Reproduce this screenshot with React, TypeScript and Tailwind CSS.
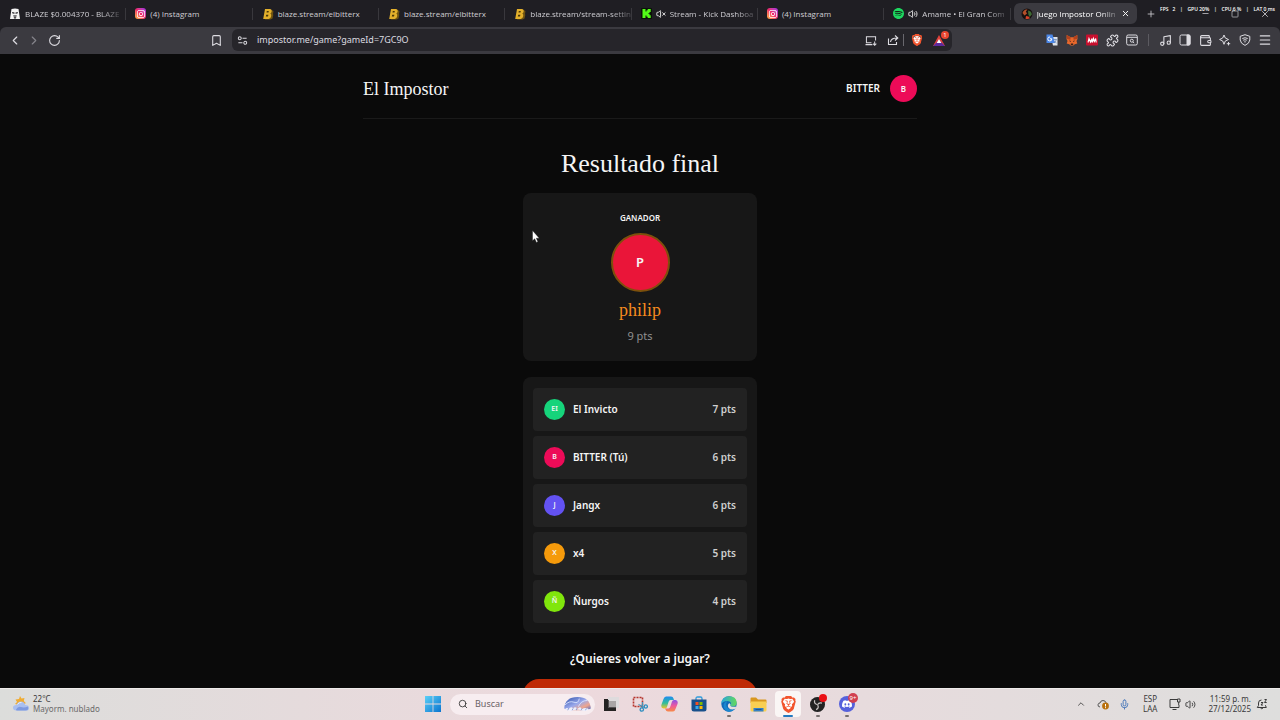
import React from "react";
import {
  Bookmark,
  ChevronLeft,
  ChevronRight,
  ChevronUp,
  Menu,
  Mic,
  Minus,
  Music,
  Plus,
  Puzzle,
  RotateCw,
  Search,
  Square,
  Volume2,
  VolumeX,
  Wallet,
  X,
} from "lucide-react";
import { SiBrave, SiDiscord, SiInstagram, SiObsstudio, SiSpotify } from "react-icons/si";

const sans = "font-['Noto_Sans','Open_Sans',sans-serif]";
const serif = "font-['Liberation_Serif',serif]";

/* ---------- favicons ---------- */

function TokenIcon() {
  return (
    <svg viewBox="0 0 12 12" className="size-3 shrink-0">
      <path d="M2.500 1Q6-.2 9.500 1l.6 4L11 11H1l.9-6z" fill="#f4f4f4" />
      <path d="M3 4l2.500.5v1.300L3.500 5.500zM9 4l-2.500.5v1.300l2-.3zM4.500 7h3L7 10.500H5z" fill="#27262b" />
      <path d="M5.600 7h.8v2.500h-.8z" fill="#f4f4f4" />
    </svg>
  );
}

function InstagramIcon() {
  return (
    <span className="flex size-[11px] shrink-0 items-center justify-center rounded-[3px] bg-linear-to-tr from-[#ffb52e] via-[#f0246b] to-[#9b1ff0] text-white">
      <SiInstagram size={8} />
    </span>
  );
}

function BlazeIcon() {
  return (
    <svg viewBox="0 0 12 12" className="size-3 shrink-0">
      <path d="M4 2h5.500l2 1-.5 3 .3 1-.8 3.500-2 1H3z" fill="#6e5310" />
      <path d="M3 1h5.200q1.800.2 1.500 2.200T8.300 5.600q1.300.6.900 2.600T6.700 11H1.200z" fill="#e3b02b" />
      <path d="M4.800 3h2l-.3 1.500h-2zM4.200 6.700h2.200L6 8.600H3.800z" fill="#4a3708" />
    </svg>
  );
}

function KickIcon() {
  return (
    <svg viewBox="0 0 11 11" className="size-[11px] shrink-0">
      <rect width="11" height="11" rx="1" fill="#0a1207" />
      <path d="M1.500 1h3v2.500h1v-1.200h1.200V1h3v3H8.500v1.200H7.400v.8h1.100v1.200h1.200V10h-3V8.800H5.500V7.600h-1V10h-3z" fill="#53fc18" />
    </svg>
  );
}

function SpotifyIcon() {
  return (
    <span className="flex size-[11px] shrink-0 rounded-full bg-[#0f2a18] text-[#1ed760]">
      <SiSpotify size={11} />
    </span>
  );
}

function ImpostorIcon() {
  return (
    <svg viewBox="0 0 12 12" className="size-3 shrink-0">
      <circle cx="6" cy="6" r="5.500" fill="#17110f" />
      <path d="M1.500 5Q3 .8 6.500 1.500L4.800 3.600 6 5.500 3.500 7.500z" fill="#b4502a" />
      <path d="M7 2.500q3.600.6 3.800 4L8.600 9 7.400 6.600z" fill="#3f6b35" />
      <path d="M5 8l2.500.5L9 10.300Q7 11.500 4.500 10.800z" fill="#d8432a" />
    </svg>
  );
}

/* ---------- browser chrome ---------- */

type Tab = { title: string; icon: React.ReactNode; audio?: "on" | "off"; fade?: boolean };

const tabs: Tab[] = [
  { title: "BLAZE $0.004370 - BLAZE", icon: <TokenIcon />, fade: true },
  { title: "(4) Instagram", icon: <InstagramIcon /> },
  { title: "blaze.stream/elbitterx", icon: <BlazeIcon /> },
  { title: "blaze.stream/elbitterx", icon: <BlazeIcon /> },
  { title: "blaze.stream/stream-settin", icon: <BlazeIcon />, fade: true },
  { title: "Stream - Kick Dashboa", icon: <KickIcon />, audio: "off", fade: true },
  { title: "(4) Instagram", icon: <InstagramIcon /> },
  { title: "Amame • El Gran Com", icon: <SpotifyIcon />, audio: "on", fade: true },
];

const fadeMask = "[mask-image:linear-gradient(to_right,black_80%,#0004)]";

function TabStrip() {
  return (
    <div className="relative grid h-[27px] grid-cols-[1137fr_143fr] items-center bg-[#1f1e23] font-['Open_Sans','Noto_Sans',sans-serif] text-[8px] text-[#cfced3]">
      <div role="tablist" className="grid h-full min-w-0 grid-cols-9 items-center">
        {tabs.map((tab, i) => (
          <button
            key={i}
            role="tab"
            className="flex h-3 min-w-0 items-center gap-1 border-r border-[#39383d] pl-[9px]"
          >
            {tab.icon}
            {tab.audio === "on" && <Volume2 size={10} className="shrink-0 text-white" />}
            {tab.audio === "off" && <VolumeX size={10} className="shrink-0 text-white" />}
            <span className={`leading-3 whitespace-nowrap ${tab.fade ? fadeMask : ""}`}>
              {tab.title}
            </span>
          </button>
        ))}
        <div className="ml-[3px] flex h-[21px] min-w-0 items-center rounded-md bg-[#3b3a40] px-[7px] text-white">
          <button role="tab" aria-selected="true" className="flex min-w-0 flex-1 items-center gap-1">
            <ImpostorIcon />
            <span className={`leading-3 whitespace-nowrap ${fadeMask}`}>Juego Impostor Onlin</span>
          </button>
          <button aria-label="Cerrar pestaña" className="shrink-0">
            <X size={9} strokeWidth={2.500} />
          </button>
        </div>
      </div>
      <div className="flex items-center">
        <button aria-label="Nueva pestaña" className="pl-[9px]">
          <Plus size={10} />
        </button>
        <div className="ml-auto flex items-center gap-[21px] pr-[10px]">
          <button aria-label="Minimizar"><Minus size={9} /></button>
          <button aria-label="Maximizar"><Square size={8} /></button>
          <button aria-label="Cerrar"><X size={10} /></button>
        </div>
      </div>
      <div className="pointer-events-none absolute top-[6px] right-[5px] flex w-[115px] justify-between text-[5px] leading-[7px] font-semibold text-white">
        <span>FPS &nbsp; 2</span>
        <span>|</span>
        <span>GPU 20%</span>
        <span>|</span>
        <span>CPU 6 %</span>
        <span>|</span>
        <span>LAT 0 ms</span>
      </div>
    </div>
  );
}

function BraveLion({ size }: { size: number }) {
  return (
    <span className="relative flex shrink-0 items-center justify-center text-[#f2542d]">
      <span className="absolute size-3/5 rounded-full bg-white" />
      <SiBrave size={size} className="relative" />
    </span>
  );
}

function TranslateIcon() {
  return (
    <svg viewBox="0 0 12 12" className="size-3">
      <path d="M5 3h6.500v8.500H7z" fill="#dfe3ea" />
      <path d="M.5.500h6l2.500 8.500H.5z" fill="#4a86e8" />
      <path d="M5.800 4.800H3.900M4.200 3a2 2 0 1 0 1.600 1.800" stroke="#fff" fill="none" />
      <path d="M7.500 5.500h3.200M9 4.800v.7M8 9q2-1.500 2.300-3.500M8.300 7l2.200 2.300" stroke="#5f7fb5" strokeWidth=".7" fill="none" />
    </svg>
  );
}

function FoxIcon() {
  return (
    <svg viewBox="0 0 12 12" className="size-3">
      <path d="M.7 1l4 2.200h2.600l4-2.200.2 4-1 2 .8 2.500-2.500.8L7.300 11.500H4.700L3.200 10.300.700 9.500l.8-2.500-1-2z" fill="#e8682c" />
      <path d="M.7 1l4 2.200-.4 2.500L1 5zM11.300 1l-4 2.200.4 2.500L11 5z" fill="#b3421d" />
      <path d="M3 6.500l2 .5-.7 1zM9 6.500L7 7l.7 1zM4.800 9.500h2.400v1.500H4.800z" fill="#3b2218" />
    </svg>
  );
}

function MendeleyIcon() {
  return (
    <svg viewBox="0 0 12 12" className="size-3">
      <rect width="12" height="11" y=".5" rx="1" fill="#c8102e" />
      <path d="M2 8.500l1-4 1.500 3.500 1.500-3.500v4M6.500 8.500l1-4 1 3 1.200-3 .5 4" stroke="#fff" strokeWidth="1.100" fill="none" />
    </svg>
  );
}

function ReaderIcon() {
  return (
    <svg viewBox="0 0 12 12" className="size-3" fill="none" stroke="currentColor">
      <rect x=".7" y="1" width="10.600" height="10" rx="1.500" />
      <path d="M1 3.300h10" />
      <circle cx="5.800" cy="6.700" r="1.500" />
      <path d="M7 8l1.200 1" />
    </svg>
  );
}

function SidebarIcon() {
  return (
    <svg viewBox="0 0 12 12" className="size-3" fill="none" stroke="currentColor">
      <rect x="1" y="1" width="10" height="10" rx="1.500" />
      <path d="M8 1h2q1 0 1 1v8q0 1-1 1H8z" fill="currentColor" />
    </svg>
  );
}

function SparkIcon() {
  return (
    <svg viewBox="0 0 12 12" className="size-3" fill="none" stroke="currentColor" strokeLinejoin="round">
      <path d="M5 1l1.300 3L9.500 5.500 6.300 7 5 10.300 3.700 7 .6 5.500 3.700 4z" />
      <path d="M9.500 8v3.400M7.800 9.700h3.400" />
    </svg>
  );
}

function VpnIcon() {
  return (
    <svg viewBox="0 0 12 12" className="size-3" fill="none" stroke="currentColor">
      <path d="M6 .7l4.800 1.600V6Q10.500 9.500 6 11.400 1.500 9.500 1.200 6V2.300z" />
      <path d="M3.300 4.500q2.700-1.500 5.400 0M4.200 6.200q1.800-1 3.600 0M6 7v1.500" />
    </svg>
  );
}

function SiteSettingsIcon() {
  return (
    <svg viewBox="0 0 12 12" className="size-[11px] shrink-0" fill="none" stroke="currentColor" strokeWidth="1.100">
      <circle cx="3" cy="3.500" r="1.600" />
      <path d="M6 3.500h4.500M1.500 8.500H6" />
      <circle cx="9" cy="8.500" r="1.600" />
    </svg>
  );
}

function InstallIcon() {
  return (
    <svg viewBox="0 0 13 12" className="h-[11px] w-3" fill="none" stroke="currentColor" strokeWidth="1.100">
      <path d="M7 8.500H1.500v-6.500h10v4M.5 10.500H8M10.500 7v4M8.700 9.300l1.800 1.800 1.800-1.800" />
    </svg>
  );
}

const tools: [string, React.ReactNode][] = [
  ["Traducir", <TranslateIcon />],
  ["Cartera de cripto", <FoxIcon />],
  ["Referencias", <MendeleyIcon />],
  ["Extensiones", <Puzzle size={13} />],
  ["Buscar pestañas", <ReaderIcon />],
];

const panels: [string, React.ReactNode][] = [
  ["Música", <Music size={13} />],
  ["Panel lateral", <SidebarIcon />],
  ["Billetera", <Wallet size={13} />],
  ["Asistente", <SparkIcon />],
  ["VPN", <VpnIcon />],
  ["Menú", <Menu size={14} />],
];

function ToolRow({ items }: { items: [string, React.ReactNode][] }) {
  return (
    <div className="flex items-center">
      {items.map(([label, icon]) => (
        <button key={label} aria-label={label} className="flex w-5 justify-center">
          {icon}
        </button>
      ))}
    </div>
  );
}

function Toolbar() {
  return (
    <div className="grid h-[27px] grid-cols-[232fr_720fr_328fr] items-center rounded-t-md bg-[#3b3a40] pb-px text-[#dddce1]">
      <div className="flex items-center pl-2">
        <button aria-label="Atrás" className="flex w-[14px] justify-center"><ChevronLeft size={15} /></button>
        <button aria-label="Adelante" className="ml-[5px] flex w-[14px] justify-center text-[#85848a]"><ChevronRight size={15} /></button>
        <button aria-label="Recargar" className="ml-[6px] flex w-[14px] justify-center"><RotateCw size={13} /></button>
        <button aria-label="Marcador" className="mr-[9px] ml-auto"><Bookmark size={13} /></button>
      </div>
      <div className="flex h-[22px] min-w-0 items-center rounded-md bg-[#26252a] pl-[5px] text-[9px]">
        <SiteSettingsIcon />
        <label htmlFor="url" className="sr-only">Dirección</label>
        <input
          id="url"
          className="ml-[9px] min-w-0 flex-1 bg-transparent leading-4 outline-none"
          defaultValue="impostor.me/game?gameId=7GC9O"
        />
        <button aria-label="Instalar"><InstallIcon /></button>
        <button aria-label="Compartir" className="ml-[10px]">
          <svg viewBox="0 0 12 12" className="size-3" fill="none" stroke="currentColor" strokeWidth="1.100">
            <path d="M1.500 4.500v6h8v-2.500M3.500 8q.5-4 6.500-4M8 1.500L10.800 4 8 6.500" />
          </svg>
        </button>
        <span className="ml-1 h-3 w-px bg-[#69686e]" />
        <button aria-label="Escudos" className="ml-[7px]"><BraveLion size={12} /></button>
        <button aria-label="Recompensas" className="relative mr-[7px] ml-[10px] flex">
          <svg viewBox="0 0 12 11" className="h-[11px] w-3">
            <path d="M6 0L12 11H0z" fill="#e0403a" />
            <path d="M6 5L12 11H0z" fill="#5b2a9d" />
            <path d="M6 4l2.300 4H3.700z" fill="#fff" />
          </svg>
          <span className="absolute -top-1 -right-1 flex size-2 items-center justify-center rounded-full bg-[#e84530] text-[6px] leading-none text-white">1</span>
        </button>
      </div>
      <div className="flex items-center justify-end pr-[5px]">
        <ToolRow items={tools} />
        <span className="mx-[6px] h-3 w-px bg-[#5c5b61]" />
        <ToolRow items={panels} />
      </div>
    </div>
  );
}

/* ---------- game page ---------- */

const players = [
  { initial: "EI", name: "El Invicto", pts: 7, color: "bg-[#16d47b]" },
  { initial: "B", name: "BITTER (Tú)", pts: 6, color: "bg-[#ed0b58]" },
  { initial: "J", name: "Jangx", pts: 6, color: "bg-[#6352f2]" },
  { initial: "X", name: "x4", pts: 5, color: "bg-[#f59a0b]" },
  { initial: "Ñ", name: "Ñurgos", pts: 4, color: "bg-[#80e60c]" },
];

function Game() {
  return (
    <main className="min-h-0 flex-1 overflow-hidden bg-[#0a0a0a] text-[#f5f5f5]">
      <div className="mx-auto max-w-[554px]">
        <header className="flex h-[65px] items-center border-b border-[#1a1a1a] pt-[5px]">
          <span className={`${serif} text-lg`}>El Impostor</span>
          <span className="ml-auto text-[10px] font-semibold">BITTER</span>
          <span className="ml-[10px] flex size-[27px] items-center justify-center rounded-full bg-[#ed0b58] text-[8px] font-semibold">B</span>
        </header>
        <h1 className={`${serif} mt-[29px] text-center text-[26px] leading-8`}>Resultado final</h1>
        <div className="mx-auto mt-[13px] flex max-w-[234px] flex-col">
          <section className="flex h-[168px] flex-col items-center rounded-lg bg-[#171717] pt-[19px]">
            <h2 className="text-[8px] leading-3 font-semibold">GANADOR</h2>
            <span className="mt-[9px] flex size-[59px] items-center justify-center rounded-full border-2 border-[#7d500c] bg-[#ea1539] text-[13px] font-semibold">P</span>
            <span className={`${serif} mt-[6px] text-lg leading-6 text-[#f58a1f]`}>philip</span>
            <span className="mt-[6px] text-[11px] leading-4 text-[#8f8f8f]">9 pts</span>
          </section>
          <ol className="mt-4 flex flex-col gap-[5px] rounded-lg bg-[#171717] px-[10px] pt-[11px] pb-[10px]">
            {players.map((p) => (
              <li key={p.name} className="flex h-[43px] items-center rounded bg-[#222222] px-[11px] text-[10px] font-semibold">
                <span className={`flex size-[21px] items-center justify-center rounded-full text-[7px] ${p.color}`}>{p.initial}</span>
                <span className="ml-2">{p.name}</span>
                <span className="ml-auto text-[#cfcfcf]">{p.pts} pts</span>
              </li>
            ))}
          </ol>
          <p className="mt-[18px] text-center text-xs leading-4 font-semibold">¿Quieres volver a jugar?</p>
          <button aria-label="Volver a jugar" className="mt-3 h-9 rounded-2xl bg-[#bf2a05]" />
        </div>
      </div>
    </main>
  );
}

/* ---------- taskbar ---------- */

function WindowsIcon() {
  return (
    <svg viewBox="0 0 16 16" className="size-4">
      <defs>
        <linearGradient id="win" x2="1" y2="1">
          <stop stopColor="#5bd0f7" />
          <stop offset="1" stopColor="#0a74cf" />
        </linearGradient>
      </defs>
      <path d="M0 0h7.600v7.600H0zM8.400 0H16v7.600H8.400zM0 8.400h7.600V16H0zM8.400 8.400H16V16H8.400z" fill="url(#win)" />
    </svg>
  );
}

function SearchArt() {
  return (
    <svg viewBox="0 0 32 18" className="h-4 w-[31px] shrink-0">
      <defs>
        <linearGradient id="art" x2="1" y2="1">
          <stop stopColor="#2d50a8" />
          <stop offset=".5" stopColor="#9aa9ec" />
          <stop offset=".75" stopColor="#f0a58c" />
          <stop offset="1" stopColor="#4468ca" />
        </linearGradient>
      </defs>
      <path d="M1 14Q2 1 16 1T31 14Q28 16 16 16T1 14z" fill="url(#art)" />
      <path d="M2 10Q7 5 12 7T18 3M17 12Q20 5 27 5" stroke="#d9e3ff" fill="none" />
      <path d="M2 15Q4 12 6 14.500 9 11 11 14 14 11 16 14.500 19 11 21 14.500 25 12 29 15 25 18 20 16T8 17z" fill="#eef0fc" />
      <path d="M5 16l1-2M10 16l1-2M15 16v-2M20 16l1-2M25 16l1-2" stroke="#5a75c4" strokeWidth=".7" />
    </svg>
  );
}

function TaskViewIcon() {
  return (
    <svg viewBox="0 0 16 16" className="size-4">
      <rect x="5" y="1" width="11" height="11" fill="#dedbdd" />
      <rect x="5" y="5" width="8" height="7" fill="#a9a5a6" />
      <path d="M1 3h4v8h8v4H1z" fill="#242222" />
      <path d="M5 4h1v7h7v1H5z" fill="#535052" />
    </svg>
  );
}

function SnipIcon() {
  return (
    <svg viewBox="0 0 16 16" className="size-4" fill="none">
      <rect x="1.500" y="1.500" width="9" height="9" stroke="#b5342d" strokeWidth="1.600" strokeDasharray="2 1" />
      <path d="M6.500 8.500l6 3M10.500 6v6" stroke="#4b91b5" strokeWidth="1.300" />
      <circle cx="9.800" cy="13.500" r="1.700" stroke="#2b8dc0" strokeWidth="1.300" />
      <circle cx="13.800" cy="10.500" r="1.600" stroke="#2b8dc0" strokeWidth="1.300" />
    </svg>
  );
}

function CopilotIcon() {
  return (
    <svg viewBox="0 0 17 16" className="h-4 w-[17px]">
      <defs>
        <linearGradient id="copA" x2="0" y2="1">
          <stop stopColor="#1f8cf0" />
          <stop offset=".55" stopColor="#31bd9b" />
          <stop offset="1" stopColor="#f3c528" />
        </linearGradient>
        <linearGradient id="copB" x2="0" y2="1">
          <stop stopColor="#8d50e8" />
          <stop offset=".5" stopColor="#ee589c" />
          <stop offset="1" stopColor="#f88a45" />
        </linearGradient>
      </defs>
      <path d="M5 .5h5q2 0 2.500 2L13 4H9.500Q8 4 7.500 6L6 11q-.5 1.500-2 1.500H2.500Q-.5 12 .5 8.500L2.500 3Q3.300.500 5 .5z" fill="url(#copA)" />
      <path d="M12 15.500H7q-2 0-2.500-2L4 12.500h3.500Q9 12 9.500 10L11 5.500Q11.500 4 13 4h1.500q3 .5 2 4L14.500 13q-.8 2.500-2.500 2.500z" fill="url(#copB)" />
    </svg>
  );
}

function StoreIcon() {
  return (
    <svg viewBox="0 0 16 16" className="size-4">
      <path d="M5 4V2.500Q5 1 6.500 1h3Q11 1 11 2.500V4" stroke="#2f9bdc" strokeWidth="1.300" fill="none" />
      <path d="M.5 3.500h15V13q0 2.500-2.500 2.500H3Q.5 15.500.5 13z" fill="#18508b" />
      <path d="M4.500 6h3v3h-3z" fill="#f25022" />
      <path d="M8.500 6h3v3h-3z" fill="#7fba00" />
      <path d="M4.500 10h3v3h-3z" fill="#35a9ee" />
      <path d="M8.500 10h3v3h-3z" fill="#ffb900" />
    </svg>
  );
}

function EdgeIcon() {
  return (
    <svg viewBox="0 0 16 16" className="size-4">
      <defs>
        <linearGradient id="edgeTop" x2="1">
          <stop stopColor="#2aa6dc" />
          <stop offset="1" stopColor="#63d95b" />
        </linearGradient>
      </defs>
      <circle cx="8" cy="8" r="7.700" fill="#1169b8" />
      <path d="M.3 8Q.8.300 8 .300q7.200 0 7.700 6.200.1 4-4 4-2.500 0-2.700-1.500 1.200-1 .8-2.400Q9 5 6.500 5 2 5 .3 8z" fill="url(#edgeTop)" />
      <path d="M6.500 5.300Q4 8 6 11.300q2.500 3.500 7.700 1.800Q11 16.500 6.500 15.500 2 13 2.700 8.500 3.500 5.500 6.500 5.300z" fill="#1a86cf" />
      <path d="M9.400 8.600Q9 9.300 9.500 9.900q2 1.500 6 .5-.6 2-1.800 2.700-4 1-6-1.200T8.300 7z" fill="#e4dfe1" />
    </svg>
  );
}

function FolderIcon() {
  return (
    <svg viewBox="0 0 17 15" className="h-[15px] w-[17px]">
      <path d="M.5 1.500Q.5.500 1.500.500H6L8 2.500h7.500q1 0 1 1V6H.5z" fill="#d9971f" />
      <path d="M.5 4.500H16.500V13q0 1.500-1.500 1.500H2Q.5 14.500.5 13z" fill="#f9cf52" />
      <path d="M3.500 11h10v3.500h-10z" fill="#3580c6" />
      <path d="M5.500 12.500h6" stroke="#1c568f" />
    </svg>
  );
}

function WeatherIcon() {
  return (
    <svg viewBox="0 0 18 18" className="size-[18px]">
      <path d="M8 1l1.500 2.500L12.500 3l-.7 3 2 2-3 3L3 9l2-2L3.500 4.500 7 4z" fill="#f0ac32" />
      <path d="M4.500 15.500Q1 15.500 1 12.800T4.500 10Q5.500 6.500 9 6.500t4.200 3.500Q17 10 17 13t-3.500 2.500z" fill="#a9bff0" />
      <path d="M4 14.500Q6 11 9 12t7-.5q1 4-2.500 4h-9z" fill="#7e9ae0" />
      <path d="M5.500 9.500Q7 7 9.500 7.500" stroke="#e7eefd" fill="none" />
    </svg>
  );
}

function Dot() {
  return <span className="absolute bottom-0 h-[2px] w-1 rounded-full bg-[#77706f]" />;
}

const itemClass = "relative flex h-[26px] items-center justify-center";

function Taskbar() {
  return (
    <footer className="grid h-8 shrink-0 grid-cols-[1fr_auto_1fr] items-center border-t border-[#eeebea] bg-linear-to-r from-[#dcdddb] via-[#edd9dd] via-45% to-[#dededd] pb-px text-[8px] leading-[10px] text-[#3a3a3a]">
      <button className="flex items-center gap-[3px] pl-3 text-left">
        <WeatherIcon />
        <span className="flex flex-col">
          <span>22°C</span>
          <span className="text-[#6a6a6a]">Mayorm. nublado</span>
        </span>
      </button>
      <nav className="flex items-center pl-[7px]">
        <button aria-label="Inicio" className="mr-[9px]"><WindowsIcon /></button>
        <label className="mr-px flex h-[21px] w-[145px] items-center rounded-full bg-[#f7edf0] pr-[2px] pl-2">
          <Search size={10} className="shrink-0 text-[#2c2c2c]" />
          <input
            type="search"
            aria-label="Buscar"
            placeholder="Buscar"
            className="ml-[7px] min-w-0 flex-1 bg-transparent text-[9px] leading-4 outline-none placeholder:text-[#6a6266]"
          />
          <SearchArt />
        </label>
        <div className="grid w-[266px] grid-cols-9">
          <button aria-label="Vista de tareas" className={itemClass}><TaskViewIcon /></button>
          <button aria-label="Recortes" className={itemClass}><SnipIcon /></button>
          <button aria-label="Copilot" className={itemClass}><CopilotIcon /></button>
          <button aria-label="Tienda" className={itemClass}><StoreIcon /></button>
          <button aria-label="Edge" className={itemClass}><EdgeIcon /><Dot /></button>
          <button aria-label="Archivos" className={itemClass}><FolderIcon /></button>
          <button aria-label="Brave" className={`${itemClass} mx-[2px] rounded-sm bg-[#faf6f5]`}>
            <BraveLion size={17} />
            <span className="absolute bottom-0 h-[2px] w-[10px] rounded-full bg-[#2379bf]" />
          </button>
          <button aria-label="OBS" className={itemClass}>
            <span className="flex rounded-full bg-[#b9b4b3] text-[#1d1d1d]">
              <svg viewBox="0 0 16 16" className="size-[15px]">
                <circle cx="8" cy="8" r="8" fill="#232323" />
                <path d="M5 3.500q-1 3.500 2.500 4.500M12.800 6.500Q9.500 5.500 8 8.200M6.500 13.500q3.500-1.500 1.700-5" stroke="#c9c5c4" strokeWidth="1.300" fill="none" />
              </svg>
            </span>
            <span className="absolute top-[3px] right-[5px] size-2 rounded-full bg-[#ea1015]" />
            <Dot />
          </button>
          <button aria-label="Discord" className={itemClass}>
            <span className="flex size-4 items-center justify-center rounded-full bg-[#5661dc] text-white">
              <SiDiscord size={10} />
            </span>
            <span className="absolute top-[2px] right-[4px] flex size-[10px] items-center justify-center rounded-full bg-[#d14050] text-[6px] leading-none text-white">9+</span>
            <Dot />
          </button>
        </div>
      </nav>
      <div className="flex items-center justify-end pr-3">
        <button aria-label="Iconos ocultos" className="mr-[11px]"><ChevronUp size={10} /></button>
        <button aria-label="Sincronización" className="mr-[10px]">
          <svg viewBox="0 0 12 12" className="size-3">
            <path d="M3 9Q.7 8.700 1 6.800T3 5Q3.500 2.500 6 2.500T9.200 5" stroke="#555" fill="none" />
            <circle cx="8.500" cy="8" r="3.400" fill="#b9700c" />
            <path d="M8.500 6v2.500M8.500 9.200v1" stroke="#fff" />
          </svg>
        </button>
        <button aria-label="Micrófono" className="mr-[13px] text-[#4273b8]"><Mic size={11} /></button>
        <button className="mr-3 flex flex-col items-center"><span>ESP</span><span>LAA</span></button>
        <button aria-label="Red" className="mr-1">
          <svg viewBox="0 0 12 12" className="size-3" fill="none" stroke="currentColor">
            <path d="M8 1.500H1v8h9V7M3.500 11.500h4M8.500 1h2.500v3H8.500zM9.700 4v3" />
          </svg>
        </button>
        <button aria-label="Volumen" className="mr-3"><Volume2 size={11} /></button>
        <button className="flex flex-col items-end"><span>11:59 p. m.</span><span>27/12/2025</span></button>
        <button aria-label="Notificaciones" className="ml-[5px]">
          <svg viewBox="0 0 12 12" className="size-3" fill="none" stroke="currentColor">
            <path d="M5.500 2Q2.500 2 2.500 5v2.500L1.300 9.500h9L9.500 7.500V7M4.500 10q1.200 1.500 2.500 0M5 4.500h2L5 7h2M8.500 1.500h2l-2 3h2.200" />
          </svg>
        </button>
      </div>
    </footer>
  );
}

function Cursor() {
  return (
    <svg viewBox="0 0 8 13" className="pointer-events-none absolute top-[230px] left-[532px] h-[13px] w-2">
      <path d="M.5.500v10.300l2.200-2 1.700 3.600 1.500-.7-1.600-3.500h3z" fill="#fff" stroke="#111" strokeWidth=".4" />
    </svg>
  );
}

export default function App() {
  return (
    <div className={`relative flex h-screen flex-col overflow-hidden bg-[#1f1e23] ${sans}`}>
      <TabStrip />
      <Toolbar />
      <Game />
      <Taskbar />
      <Cursor />
    </div>
  );
}
